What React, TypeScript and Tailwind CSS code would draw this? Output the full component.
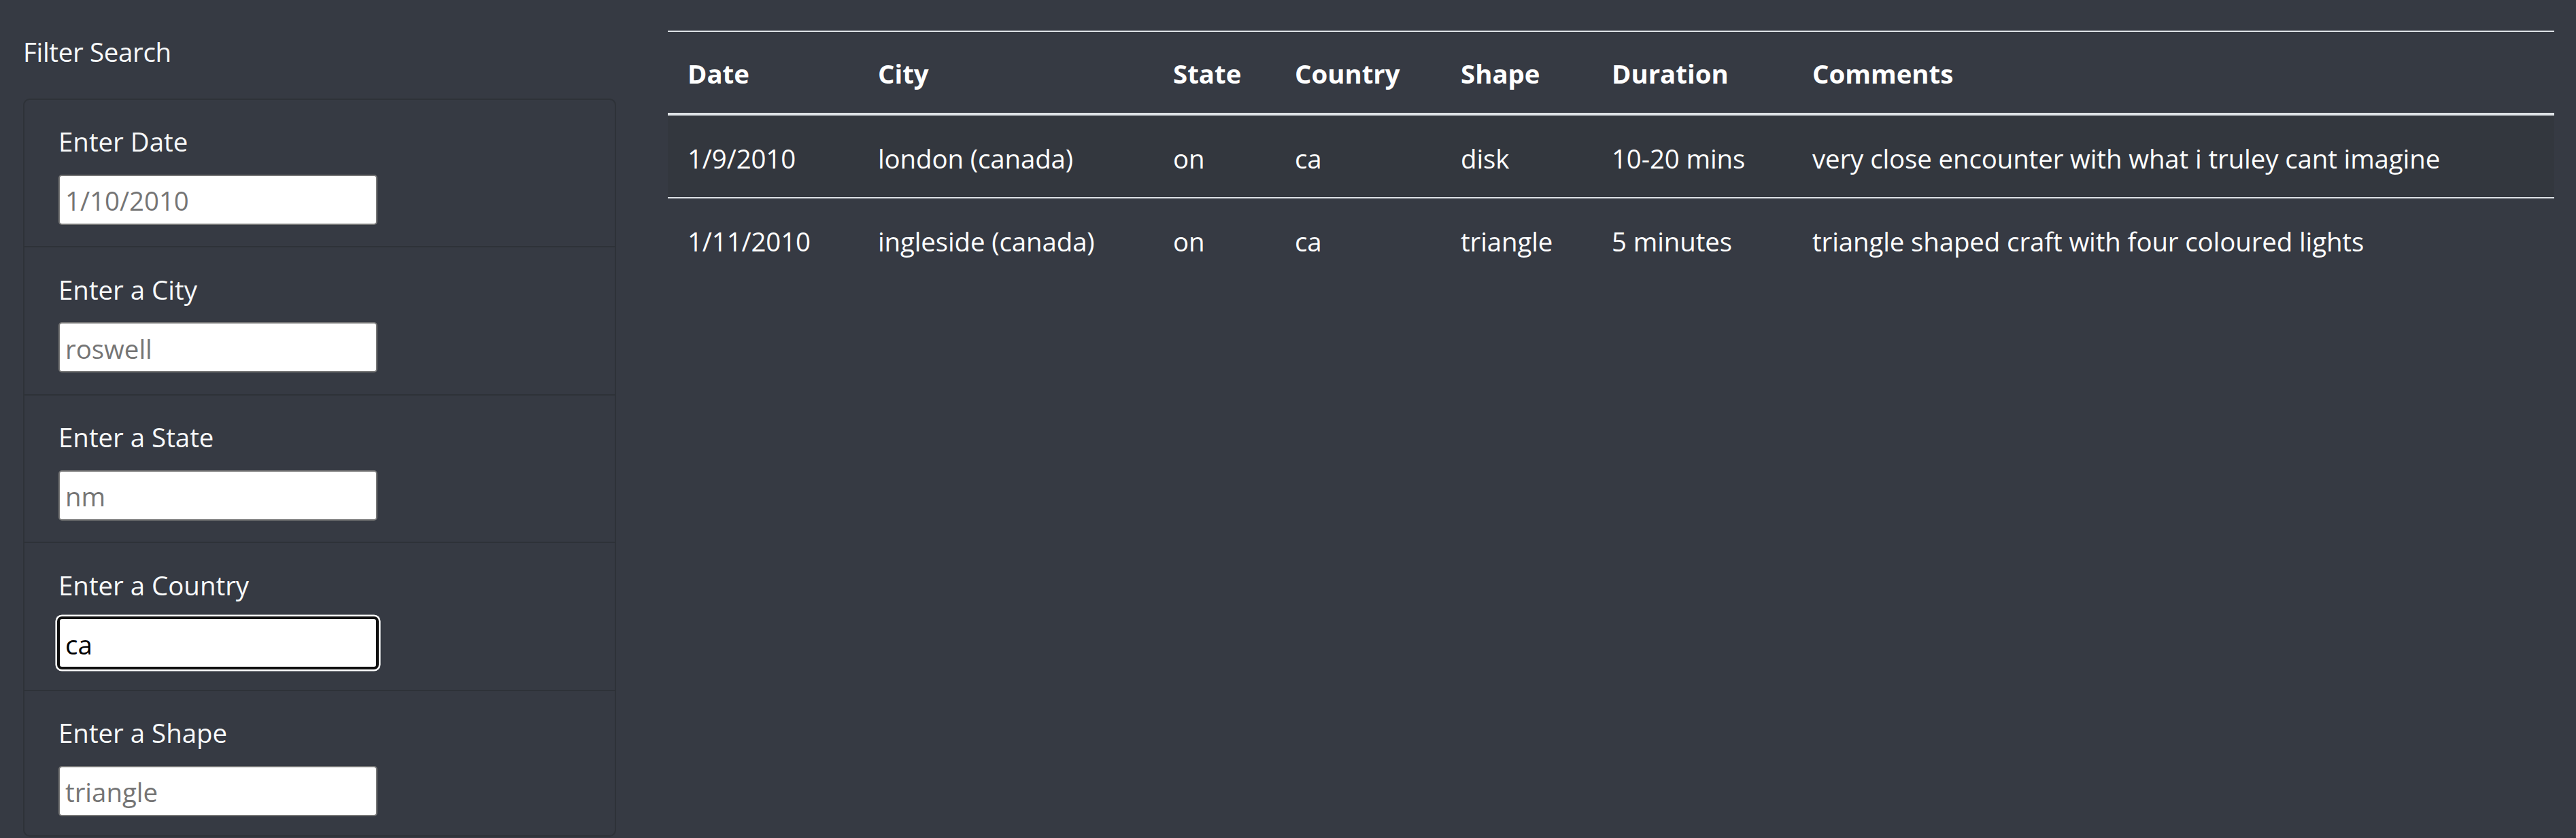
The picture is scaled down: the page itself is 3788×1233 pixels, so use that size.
import React from "react";

const filters = [
  { label: "Enter Date", placeholder: "1/10/2010" },
  { label: "Enter a City", placeholder: "roswell" },
  { label: "Enter a State", placeholder: "nm" },
  { label: "Enter a Country", placeholder: "ca", value: "ca", focused: true },
  { label: "Enter a Shape", placeholder: "triangle" },
];

const rows = [
  ["1/9/2010", "london (canada)", "on", "ca", "disk", "10-20 mins", "very close encounter with what i truley cant imagine"],
  ["1/11/2010", "ingleside (canada)", "on", "ca", "triangle", "5 minutes", "triangle shaped craft with four coloured lights"],
];

const headers = ["Date", "City", "State", "Country", "Shape", "Duration", "Comments"];

export default function App() {
  return (
    <div className="flex h-[1233px] overflow-hidden bg-[#363a43] text-[38.4px] leading-[57.6px] text-[#f8f9fa] [font-family:'Open_Sans','Noto_Sans',sans-serif]">
      <aside className="w-[946px] shrink-0 pl-[34px] pr-[40px]">
        <div className="mt-[48px] mb-[39px] h-[57.6px] tracking-[-0.3px]">Filter Search</div>
        <div className="rounded-[9.6px] border-[2.4px] border-[#2e3238]">
          {filters.map((f, i) => (
            <div
              key={f.label}
              className={
                "px-[50px] pt-[30.6px] " +
                (i === filters.length - 1 ? "pb-[28px] " : "pb-[31.3px] ") +
                (i > 0 ? "border-t-[2.4px] border-[#2e3238]" : "")
              }
            >
              <label className="mb-[19px] box-content block h-[57.6px] pt-[3px]">{f.label}</label>
              {f.focused ? (
                <input
                  readOnly
                  defaultValue={f.value}
                  className="box-border block h-[74px] w-[469px] rounded-[5px] border-[2.4px] border-[#101010] bg-white px-[8px] pt-[3px] text-[38.4px] text-black shadow-[0_0_0_2px_#101010,0_0_0_4.6px_#ffffff] outline-none"
                />
              ) : (
                <input
                  readOnly
                  placeholder={f.placeholder}
                  className="box-border block h-[74px] w-[469px] rounded-[5px] border-[2.4px] border-[#767676] bg-white px-[8px] pt-[3px] text-[38.4px] text-black outline-none placeholder:text-[#757575]"
                />
              )}
            </div>
          ))}
        </div>
      </aside>
      <main className="min-w-0 flex-1 pl-[36px] pr-[32px] pt-[44.5px]">
        <table className="w-full table-fixed border-collapse">
          <colgroup>
            <col className="w-[280px]" />
            <col className="w-[434px]" />
            <col className="w-[179px]" />
            <col className="w-[244px]" />
            <col className="w-[222px]" />
            <col className="w-[295px]" />
            <col />
          </colgroup>
          <thead>
            <tr>
              {headers.map((h) => (
                <th
                  key={h}
                  className="border-t-[2.4px] border-b-[4.8px] border-[#dee2e6] px-[29px] pt-[33px] pb-[29px] text-left font-bold text-white"
                >
                  {h}
                </th>
              ))}
            </tr>
          </thead>
          <tbody>
            {rows.map((r, ri) => (
              <tr key={ri} className={ri === 0 ? "bg-[#33373e]" : ""}>
                {r.map((c, ci) => (
                  <td
                    key={ci}
                    className={
                      "whitespace-nowrap px-[29px] pt-[34.5px] pb-[27.9px] text-white tracking-[-0.1px] " +
                      (ri > 0 ? "border-t-[2.4px] border-[#dee2e6]" : "")
                    }
                  >
                    {c}
                  </td>
                ))}
              </tr>
            ))}
          </tbody>
        </table>
      </main>
    </div>
  );
}
